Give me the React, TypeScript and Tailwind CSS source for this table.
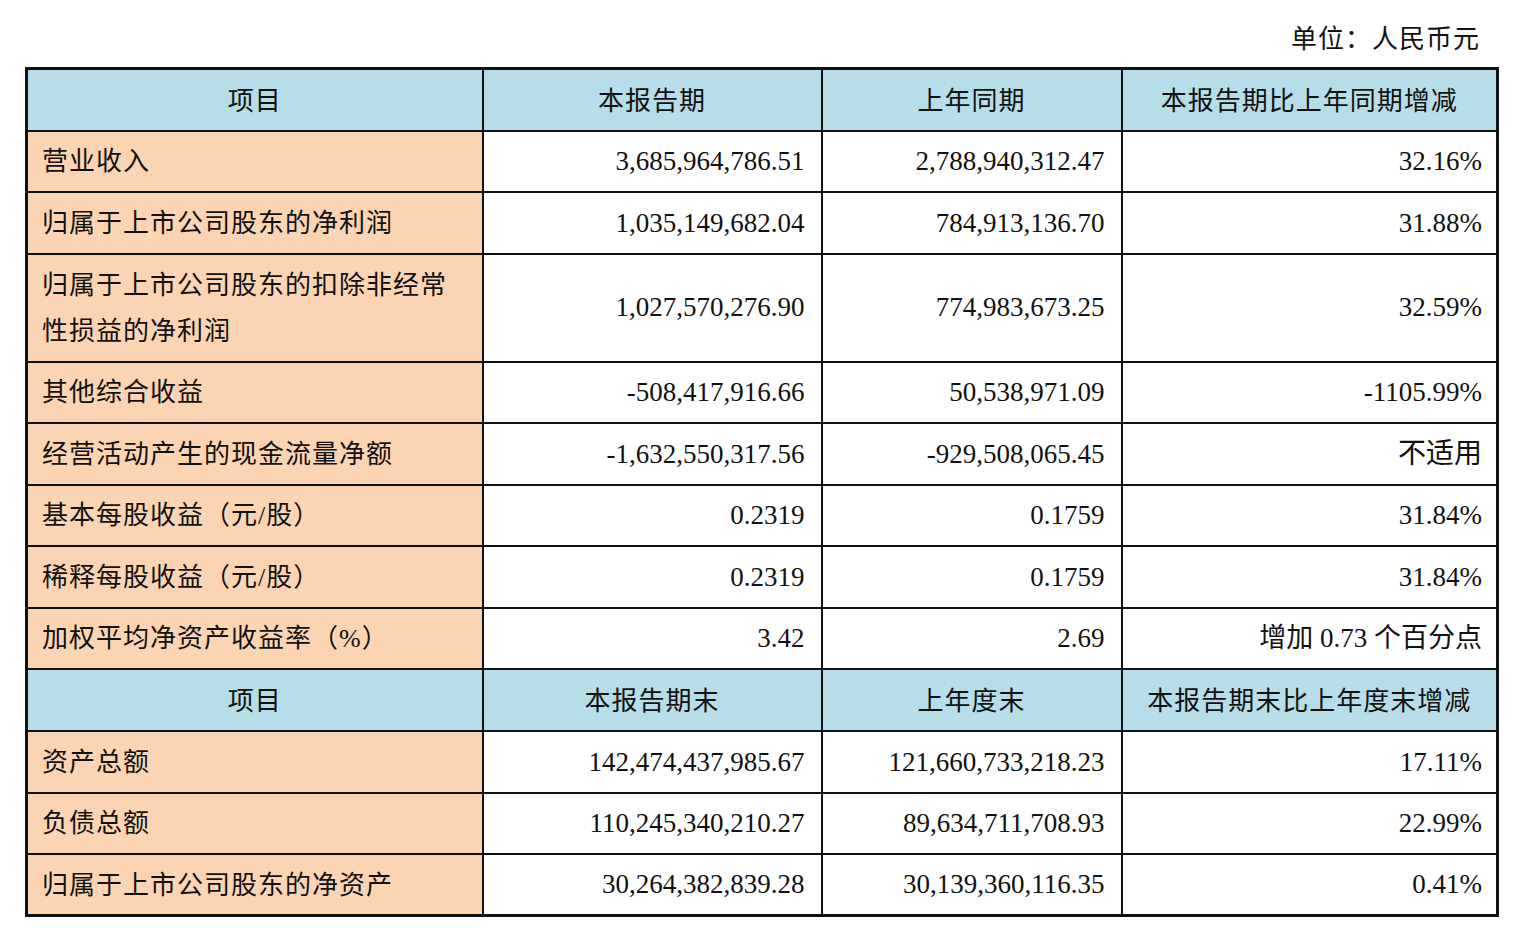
import React from "react";

type Row = {
  label: React.ReactNode;
  cur: string;
  prev: string;
  change: string;
  tall?: boolean;
};

const periodRows: Row[] = [
  { label: "营业收入", cur: "3,685,964,786.51", prev: "2,788,940,312.47", change: "32.16%" },
  { label: "归属于上市公司股东的净利润", cur: "1,035,149,682.04", prev: "784,913,136.70", change: "31.88%" },
  {
    label: (
      <>
        归属于上市公司股东的扣除非经常
        <br />
        性损益的净利润
      </>
    ),
    cur: "1,027,570,276.90",
    prev: "774,983,673.25",
    change: "32.59%",
    tall: true,
  },
  { label: "其他综合收益", cur: "-508,417,916.66", prev: "50,538,971.09", change: "-1105.99%" },
  { label: "经营活动产生的现金流量净额", cur: "-1,632,550,317.56", prev: "-929,508,065.45", change: "不适用" },
  { label: "基本每股收益（元/股）", cur: "0.2319", prev: "0.1759", change: "31.84%" },
  { label: "稀释每股收益（元/股）", cur: "0.2319", prev: "0.1759", change: "31.84%" },
  { label: "加权平均净资产收益率（%）", cur: "3.42", prev: "2.69", change: "增加 0.73 个百分点" },
];

const balanceRows: Row[] = [
  { label: "资产总额", cur: "142,474,437,985.67", prev: "121,660,733,218.23", change: "17.11%" },
  { label: "负债总额", cur: "110,245,340,210.27", prev: "89,634,711,708.93", change: "22.99%" },
  { label: "归属于上市公司股东的净资产", cur: "30,264,382,839.28", prev: "30,139,360,116.35", change: "0.41%" },
];

const cell = "border-2 border-[#111] px-[16px]";
const num = `${cell} text-right text-[27px]`;

const HeaderRow = ({ cols }: { cols: string[] }) => (
  <tr className="h-[62px] bg-[#b6dde8]">
    {cols.map((c, i) => (
      <td key={i} className={`${cell} text-center tracking-[1px] pt-[3px]`}>
        {c}
      </td>
    ))}
  </tr>
);

const DataRow = ({ row }: { row: Row }) => (
  <tr className={row.tall ? "h-[108px]" : "h-[61.5px]"}>
    <td className={`${cell} !pl-[14px] bg-[#fbd4b4] text-left tracking-[1px] leading-[46px] pt-[2px]`}>
      {row.label}
    </td>
    <td className={num}>{row.cur}</td>
    <td className={num}>{row.prev}</td>
    <td className={`${num} !pr-[14px] ${row.change === "不适用" ? "!text-[28px]" : ""}`}>{row.change}</td>
  </tr>
);

export default function App() {
  return (
    <div
      className="min-h-screen bg-white text-[#111] text-[26px] pt-[22px]"
      style={{ fontFamily: "'Liberation Serif', 'Noto Sans CJK SC', serif" }}
    >
      <div className="w-[1471px] ml-[25px]">
        <div className="text-right pr-[16px] h-[45px] leading-[36px] tracking-[1px]">单位：人民币元</div>
        <table className="w-full table-fixed border-collapse border-[3px] border-[#111]">
          <colgroup>
            <col className="w-[456px]" />
            <col className="w-[339px]" />
            <col className="w-[300px]" />
            <col className="w-[376px]" />
          </colgroup>
          <tbody>
            <HeaderRow cols={["项目", "本报告期", "上年同期", "本报告期比上年同期增减"]} />
            {periodRows.map((r, i) => (
              <DataRow key={i} row={r} />
            ))}
            <HeaderRow cols={["项目", "本报告期末", "上年度末", "本报告期末比上年度末增减"]} />
            {balanceRows.map((r, i) => (
              <DataRow key={i} row={r} />
            ))}
          </tbody>
        </table>
      </div>
    </div>
  );
}
